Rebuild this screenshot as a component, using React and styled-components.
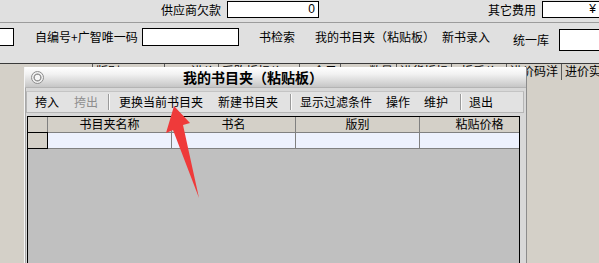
import React from 'react';
import styled, { createGlobalStyle } from 'styled-components';

const GlobalStyle = createGlobalStyle`
  html, body { margin: 0; padding: 0; background: #d4d0c8; }
  body {
    font-family: "Noto Sans CJK SC", "Liberation Sans", sans-serif;
    font-size: 12px;
    color: #000;
  }
  * { box-sizing: border-box; }
`;

const Screen = styled.div`
  position: relative;
  width: 599px;
  height: 263px;
  overflow: hidden;
  background: #d4d0c8;
  display: flex;
  flex-direction: column;
`;

const TopBar = styled.div`
  flex: none;
  height: 63px;
  background: #e0e0e0;
  display: flex;
  flex-direction: column;
`;

const FormRow = styled.div`
  flex: none;
  display: flex;
  align-items: flex-start;
  height: ${p => p.$h}px;
  padding-top: ${p => p.$pt}px;
  white-space: nowrap;
`;

const Divider = styled.div`
  flex: none;
  height: 1px;
  background: #9c9c9c;
`;

const Label = styled.span`
  flex: none;
  display: block;
  width: ${p => p.$w}px;
  margin-left: ${p => p.$ml}px;
  margin-top: ${p => p.$mt || 0}px;
  line-height: 18px;
  font-size: 12px;
  white-space: nowrap;
`;

const TextBox = styled.div`
  flex: none;
  width: ${p => p.$w}px;
  height: ${p => p.$h}px;
  margin-left: ${p => p.$ml}px;
  margin-top: ${p => p.$mt || 0}px;
  background: #fff;
  border: 1px solid #000;
  text-align: right;
  padding-right: ${p => p.$pr || 3}px;
  font-family: "Liberation Sans", "Noto Sans CJK SC", sans-serif;
  font-size: 12px;
  line-height: ${p => p.$h - 2}px;
`;

const BgGrid = styled.div`
  flex: 1;
  border-top: 1px solid #3a3a3a;
  background: #d4d0c8;
`;

const BgHeader = styled.div`
  display: flex;
  height: 16px;
  white-space: nowrap;
`;

const BgCell = styled.div`
  flex: none;
  width: ${p => p.$w}px;
  border-right: ${p => (p.$last ? 'none' : '1px solid #5a5a5a')};
  text-align: ${p => p.$align || 'center'};
  padding: 0 3px;
  line-height: 14px;
  font-size: 12px;
  overflow: hidden;
`;

/* ---------- dialog window (floats over the page) ---------- */
const Dialog = styled.div`
  position: absolute;
  left: 24px;
  top: 67px;
  width: 503px;
  height: 210px;
  background: #d8d8d8;
  border-left: 1px solid #f6f6f6;
  border-right: 1px solid #8c8c8c;
  box-shadow: inset 1px 0 0 #a8a8a8;
  display: flex;
  flex-direction: column;
`;

const TitleBar = styled.div`
  flex: none;
  height: 21px;
  display: flex;
  align-items: center;
  background: linear-gradient(#ffffff 0%, #f2f2f2 35%, #c6c6c6 100%);
  border-bottom: 1px solid #b4b4b4;
`;

const TitleIcon = styled.div`
  flex: none;
  width: 13px;
  height: 13px;
  margin-left: 6px;
  border-radius: 50%;
  border: 1px solid #8e8e8e;
  background: radial-gradient(circle, #f6f6f6 0 2.5px, #9a9a9a 3px 3.8px, #f0f0f0 4.3px);
`;

const TitleText = styled.div`
  flex: none;
  margin-left: 139px;
  font-size: 14px;
  font-weight: bold;
  line-height: 18px;
  white-space: nowrap;
`;

const Toolbar = styled.div`
  flex: none;
  margin: 3px 2px 0 1px;
  height: 22px;
  background: #e2e2e2;
  border: 1px solid #b6b6b6;
  border-top-color: #c4c4c4;
  display: flex;
  align-items: center;
  white-space: nowrap;
`;

const ToolButton = styled.span`
  flex: none;
  margin-left: ${p => p.$ml}px;
  font-size: 12px;
  line-height: 18px;
  color: ${p => (p.$disabled ? '#8e8e8e' : '#000')};
`;

const ToolSep = styled.span`
  flex: none;
  width: 2px;
  height: 16px;
  margin-left: ${p => p.$ml}px;
  border-left: 1px solid #9a9a9a;
  border-right: 1px solid #fbfbfb;
`;

const Grid = styled.div`
  flex: 1;
  margin: 3px 0 0 2px;
  width: 493px;
  border: 1px solid #000;
  border-bottom: none;
  background: #c0c0c0;
  display: flex;
  flex-direction: column;
`;

const GridRow = styled.div`
  flex: none;
  display: grid;
  grid-template-columns: 20px 124px 124px 124px 99px;
  height: 16px;
`;

const HeadCell = styled.div`
  background: #d4d0c8;
  border-right: ${p => (p.$last ? 'none' : '1px solid #808080')};
  border-bottom: 1px solid #808080;
  text-align: center;
  padding-left: ${p => p.$pl || 0}px;
  font-size: 12px;
  line-height: 14px;
  white-space: nowrap;
  overflow: hidden;
`;

const IndicatorCell = styled.div`
  background: #d4d0c8;
  border-right: 1px solid ${p => (p.$strong ? '#000' : '#808080')};
  border-bottom: 1px solid ${p => (p.$strong ? '#000' : '#808080')};
  border-top: ${p => (p.$strong ? '1px solid #000' : 'none')};
  margin-top: ${p => (p.$strong ? '-1px' : '0')};
`;

const DataCell = styled.div`
  background: #edf1fd;
  border-right: ${p => (p.$last ? 'none' : '1px solid #808080')};
  border-bottom: 1px solid #808080;
`;

const ArrowLayer = styled.svg`
  position: absolute;
  left: 0;
  top: 0;
  width: 599px;
  height: 263px;
  pointer-events: none;
`;

const bgColumns = [
  { w: 93, t: '', a: 'center' },
  { w: 72, t: '版别', a: 'left' },
  { w: 54, t: '进价', a: 'right' },
  { w: 81, t: '采购折扣价', a: 'left' },
  { w: 41, t: '金目', a: 'right' },
  { w: 56, t: '数量', a: 'right' },
  { w: 55, t: '进货折扣', a: 'center' },
  { w: 55, t: '折后价', a: 'center' },
  { w: 55, t: '进价码洋', a: 'center' },
  { w: 80, t: '进价实洋', a: 'left', last: true },
];

export default function App() {
  return (
    <>
      <GlobalStyle />
      <Screen>
        <TopBar>
          <FormRow $h={22} $pt={1}>
            <Label $ml={161} $w={60}>供应商欠款</Label>
            <TextBox $ml={6} $w={92} $h={17}>0</TextBox>
            <Label $ml={169} $w={48}>其它费用</Label>
            <TextBox $ml={6} $w={59} $h={17} $pr={4}>¥</TextBox>
          </FormRow>
          <Divider />
          <FormRow $h={40} $pt={5}>
            <TextBox $ml={-1} $w={15} $h={18} />
            <Label $ml={21} $w={100}>自编号+广智唯一码</Label>
            <TextBox $ml={7} $w={97} $h={18} />
            <Label $ml={20} $w={36}>书检索</Label>
            <Label $ml={20} $w={120}>我的书目夹（粘贴板）</Label>
            <Label $ml={7} $w={48}>新书录入</Label>
            <Label $ml={23} $w={36} $mt={3}>统一库</Label>
            <TextBox $ml={10} $w={60} $h={22} $mt={1} />
          </FormRow>
        </TopBar>

        <BgGrid>
          <BgHeader>
            {bgColumns.map((c, i) => (
              <BgCell key={i} $w={c.w} $align={c.a} $last={c.last}>
                {c.t}
              </BgCell>
            ))}
          </BgHeader>
        </BgGrid>

        <Dialog>
          <TitleBar>
            <TitleIcon />
            <TitleText>我的书目夹（粘贴板）</TitleText>
          </TitleBar>
          <Toolbar>
            <ToolButton $ml={8}>挎入</ToolButton>
            <ToolButton $ml={15} $disabled>挎出</ToolButton>
            <ToolSep $ml={10} />
            <ToolButton $ml={9}>更换当前书目夹</ToolButton>
            <ToolButton $ml={15}>新建书目夹</ToolButton>
            <ToolSep $ml={12} />
            <ToolButton $ml={8}>显示过滤条件</ToolButton>
            <ToolButton $ml={14}>操作</ToolButton>
            <ToolButton $ml={14}>维护</ToolButton>
            <ToolSep $ml={12} />
            <ToolButton $ml={7}>退出</ToolButton>
          </Toolbar>
          <Grid>
            <GridRow>
              <IndicatorCell />
              <HeadCell>书目夹名称</HeadCell>
              <HeadCell>书名</HeadCell>
              <HeadCell>版别</HeadCell>
              <HeadCell $last $pl={20}>粘贴价格</HeadCell>
            </GridRow>
            <GridRow>
              <IndicatorCell $strong />
              <DataCell />
              <DataCell />
              <DataCell />
              <DataCell $last />
            </GridRow>
          </Grid>
        </Dialog>

        <ArrowLayer viewBox="0 0 599 263">
          <polygon
            points="174,106 190,123 183,125 199,198 173,130 166,133"
            fill="#ef3a3a"
          />
        </ArrowLayer>
      </Screen>
    </>
  );
}
